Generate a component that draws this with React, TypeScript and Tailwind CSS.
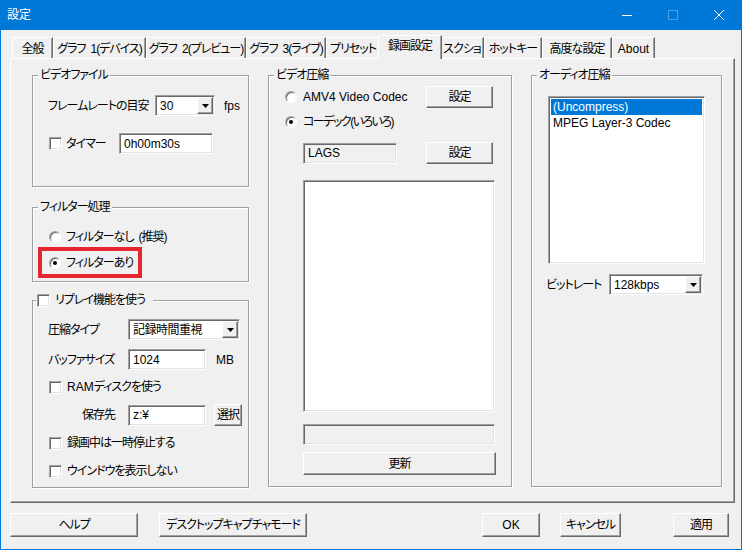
import type { ReactNode } from 'react'

// classic win32 bevels
const raised =
  'bg-[#f0f0f0] border border-t-white border-l-white border-r-[#696969] border-b-[#696969] shadow-[inset_-1px_-1px_0_#a0a0a0]'
const sunken =
  'border border-t-[#a0a0a0] border-l-[#a0a0a0] border-r-white border-b-white shadow-[inset_1px_1px_0_#696969,inset_-1px_-1px_0_#e3e3e3]'

const tabs = [
  { label: '全般', w: 'w-[41px]' },
  { label: 'グラフ\u20021(デバイス)', w: 'w-[93px]' },
  { label: 'グラフ\u20022(プレビュー)', w: 'w-[100px]' },
  { label: 'グラフ\u20023(ライブ)', w: 'w-[80px]' },
  { label: 'プリセット', w: 'w-[54px]' },
  { label: '録画設定', w: 'w-[64px]', active: true },
  { label: 'スクショ', w: 'w-[44px]' },
  { label: 'ホットキー', w: 'w-[58px]' },
  { label: '高度な設定', w: 'w-[70px]' },
  { label: 'About', w: 'w-[43px]', en: true },
]

function Check() {
  return <span className={`block w-[13px] h-[13px] shrink-0 bg-white ${sunken}`} />
}

function Radio({ on }: { on?: boolean }) {
  return (
    <span className="flex w-[12px] h-[12px] shrink-0 items-center justify-center rounded-full bg-white border border-t-[#a0a0a0] border-l-[#a0a0a0] border-r-white border-b-white shadow-[inset_1px_1px_0_#696969]">
      {on && <span className="block w-[4px] h-[4px] rounded-full bg-black" />}
    </span>
  )
}

function Btn({ className = '', children }: { className?: string; children: ReactNode }) {
  return (
    <div className={`flex items-center justify-center shrink-0 ${raised} ${className}`}>{children}</div>
  )
}

function Field({ className = '', value, disabled }: { className?: string; value?: string; disabled?: boolean }) {
  return (
    <div
      className={`flex h-[21px] shrink-0 items-center pl-[4px] tracking-normal ${disabled ? 'bg-[#f0f0f0]' : 'bg-white'} ${sunken} ${className}`}
    >
      {value}
    </div>
  )
}

function Combo({ className = '', value, en }: { className?: string; value: string; en?: boolean }) {
  return (
    <div className={`flex h-[21px] shrink-0 items-center bg-white ${sunken} ${className}`}>
      <span className={`flex-1 pl-[4px] ${en ? 'tracking-normal' : 'tracking-[-0.5px]'}`}>{value}</span>
      <span className={`mr-px flex w-[16px] h-[17px] items-center justify-center ${raised}`}>
        <svg width="7" height="4" viewBox="0 0 7 4">
          <path d="M0 0h7L3.5 4z" fill="#000" />
        </svg>
      </span>
    </div>
  )
}

function Group({ title, className = '', titleClass = 'left-[5px] px-[2px]', children }: {
  title: ReactNode
  className?: string
  titleClass?: string
  children?: ReactNode
}) {
  return (
    <div className={`relative flex flex-col shrink-0 border border-[#a0a0a0] shadow-[inset_1px_1px_0_#fff,1px_1px_0_#fff] ${className}`}>
      <div className={`absolute top-[-8px] flex h-[14px] items-center bg-[#f0f0f0] ${titleClass}`}>{title}</div>
      {children}
    </div>
  )
}

function TitleBar() {
  return (
    <div className="flex h-[30px] shrink-0 items-center bg-[#0078d7] text-white">
      <span className="flex-1 pl-[7px] text-[12px] tracking-normal">設定</span>
      <div className="flex w-[46px] h-full items-center justify-center">
        <span className="block w-[10px] h-px bg-white" />
      </div>
      <div className="flex w-[46px] h-full items-center justify-center">
        <span className="block w-[10px] h-[10px] border border-[#4d9fe2]" />
      </div>
      <div className="flex w-[46px] h-full items-center justify-center">
        <svg width="10" height="10" viewBox="0 0 10 10">
          <path d="M0 0L10 10M10 0L0 10" stroke="#fff" strokeWidth="1" />
        </svg>
      </div>
    </div>
  )
}

function Tabs() {
  return (
    <div className="relative z-10 mt-[5px] -mb-px flex h-[24px] pl-[2px]">
      {tabs.map((t) =>
        t.active ? (
          <div
            key={t.label}
            className={`relative z-10 -mx-[2px] flex h-[24px] items-center justify-center pb-[3px] bg-[#f0f0f0] border-t border-l border-r border-t-white border-l-white border-r-[#696969] shadow-[inset_-1px_0_0_#a0a0a0] ${t.w}`}
          >
            {t.label}
          </div>
        ) : (
          <div
            key={t.label}
            className={`mt-[2px] flex h-[21px] items-center justify-center pt-px border-t border-l border-r border-t-white border-l-white border-r-[#696969] shadow-[inset_-1px_0_0_#a0a0a0] ${t.en ? 'tracking-normal' : ''} ${t.w}`}
          >
            {t.label}
          </div>
        ),
      )}
    </div>
  )
}

function LeftColumn() {
  return (
    <div className="flex w-[217px] flex-col">
      <Group title="ビデオファイル" className="h-[112px] pl-[15px] pt-[19px]">
        <div className="flex h-[21px] items-center">
          <span className="w-[107px]">フレームレートの目安</span>
          <Combo value="30" en className="w-[60px]" />
          <span className="ml-[9px] tracking-normal">fps</span>
        </div>
        <div className="mt-[17px] flex h-[21px] items-center">
          <div className="ml-px flex w-[70px] items-center">
            <Check />
            <span className="ml-[4px]">タイマー</span>
          </div>
          <Field value="0h00m30s" className="w-[94px]" />
        </div>
      </Group>

      <Group title="フィルター処理" className="mt-[20px] h-[75px] pt-[19px]">
        <div className="flex h-[20px] items-center pl-[16px]">
          <Radio />
          <span className="ml-[5px]">フィルターなし{'\u2002'}(推奨)</span>
        </div>
        <div className="ml-[5px] flex w-[104px] h-[31px] items-center border-4 border-[#e3262f] pl-[7px]">
          <Radio on />
          <span className="ml-[5px]">フィルターあり</span>
        </div>
      </Group>

      <Group
        title={
          <>
            <Check />
            <span className="ml-[5px]">リプレイ機能を使う</span>
          </>
        }
        titleClass="left-[3px] pl-px pr-[8px]"
        className="mt-[18px] h-[188px] pl-[15px] pt-[18px]"
      >
        <div className="flex h-[21px] items-center">
          <span className="w-[80px]">圧縮タイプ</span>
          <Combo value="記録時間重視" className="w-[112px]" />
        </div>
        <div className="mt-[9px] flex h-[21px] items-center">
          <span className="w-[80px]">バッファサイズ</span>
          <Field value="1024" className="w-[78px]" />
          <span className="ml-[10px] tracking-normal">MB</span>
        </div>
        <div className="mt-[9px] flex h-[16px] items-center pl-px">
          <Check />
          <span className="ml-[5px]">
            <span className="tracking-normal">RAM</span>ディスクを使う
          </span>
        </div>
        <div className="mt-[9px] flex h-[22px] items-center">
          <span className="w-[80px] pl-[34px]">保存先</span>
          <Field value="z:¥" className="w-[78px]" />
          <Btn className="ml-[8px] w-[28px] h-[22px]">選択</Btn>
        </div>
        <div className="mt-[9px] flex h-[16px] items-center pl-px">
          <Check />
          <span className="ml-[5px]">録画中は一時停止する</span>
        </div>
        <div className="mt-[12px] flex h-[16px] items-center pl-px">
          <Check />
          <span className="ml-[5px]">ウインドウを表示しない</span>
        </div>
      </Group>
    </div>
  )
}

function VideoCodec() {
  return (
    <Group title="ビデオ圧縮" className="ml-[19px] w-[244px] h-[412px] pl-[16px] pt-[10px]">
      <div className="flex h-[22px] items-center">
        <div className="flex w-[141px] items-center">
          <Radio />
          <span className="ml-[6px] tracking-normal">AMV4 Video Codec</span>
        </div>
        <Btn className="w-[67px] h-[22px]">設定</Btn>
      </div>
      <div className="mt-[6px] flex h-[16px] items-center">
        <Radio on />
        <span className="ml-[6px] tracking-[-1.5px]">コーデック(いろいろ)</span>
      </div>
      <div className="mt-[12px] flex h-[22px] items-center pl-[18px]">
        <Field value="LAGS" disabled className="w-[94px]" />
        <Btn className="ml-[29px] w-[67px] h-[22px]">設定</Btn>
      </div>
      <div className={`ml-[18px] mt-[16px] w-[192px] h-[232px] bg-white ${sunken}`} />
      <Field disabled className="ml-[18px] mt-[12px] w-[192px]" />
      <Btn className="ml-[18px] mt-[7px] w-[193px] h-[23px]">更新</Btn>
    </Group>
  )
}

function AudioCodec() {
  return (
    <Group title="オーディオ圧縮" className="ml-[19px] w-[191px] h-[412px] pt-[20px]">
      <div className={`ml-[16px] flex w-[157px] h-[168px] flex-col bg-white p-[2px] tracking-normal ${sunken}`}>
        <div className="flex h-[16px] items-center bg-[#0078d7] pl-[2px] text-white">(Uncompress)</div>
        <div className="flex h-[16px] items-center pl-[2px]">MPEG Layer-3 Codec</div>
      </div>
      <div className="mt-[10px] flex h-[21px] items-center pl-[14px]">
        <span className="w-[63px]">ビットレート</span>
        <Combo value="128kbps" en className="w-[94px]" />
      </div>
    </Group>
  )
}

export default function App() {
  return (
    <div className="flex w-[742px] h-[550px] flex-col overflow-hidden whitespace-nowrap bg-[#f0f0f0] text-[12px] leading-[14px] tracking-[-1px] text-black font-['Liberation_Sans','Noto_Sans_CJK_JP',sans-serif] [font-feature-settings:'palt']">
      <TitleBar />
      <div className="flex flex-1 flex-col border-x border-b border-[#0078d7] pl-[9px]">
        <Tabs />
        <div className={`flex w-[725px] h-[445px] pl-[21px] pt-[16px] ${raised}`}>
          <LeftColumn />
          <VideoCodec />
          <AudioCodec />
        </div>
        <div className="mt-[10px] flex">
          <Btn className="w-[128px] h-[24px]">ヘルプ</Btn>
          <Btn className="ml-[21px] w-[148px] h-[24px]">デスクトップキャプチャモード</Btn>
          <Btn className="ml-[175px] w-[58px] h-[24px] tracking-normal">OK</Btn>
          <Btn className="ml-[20px] w-[61px] h-[24px]">キャンセル</Btn>
          <Btn className="ml-[52px] w-[56px] h-[24px]">適用</Btn>
        </div>
      </div>
    </div>
  )
}
